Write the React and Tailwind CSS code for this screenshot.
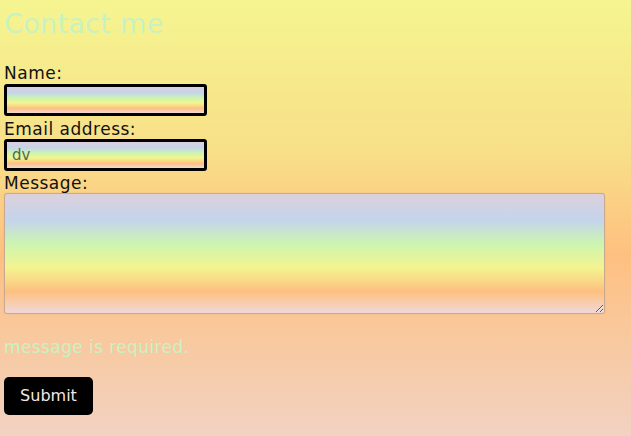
export default function App() {
  const field = "bg-[linear-gradient(to_bottom,#dcd0dc_0%,#c4d4ec_22%,#ccf5b0_42%,#f4f490_62%,#fec080_82%,#f0d8d8_100%)]";
  return (
    <div className="min-h-screen w-full bg-[linear-gradient(to_bottom,#f5f590_0%,#f8df88_35%,#fec080_58%,#f2d2c2_100%)] px-[4px] pt-[6px] font-['DejaVu_Sans',sans-serif] text-[#111]">
      <h1 className="text-[27px] leading-[36px] tracking-[0.3px] text-[#c9f2c1]">Contact me</h1>
      <form className="mt-[21px] flex flex-col">
        <label className="text-[17px] leading-[20px] tracking-[0.5px]">Name:</label>
        <input className={`mt-[1px] h-[32px] w-[203px] rounded-[3px] border-[3px] border-black ${field} outline-none`} />
        <label className="mt-[3px] text-[17px] leading-[20px] tracking-[0.5px]">Email address:</label>
        <input defaultValue="dv" className={`mt-[0px] h-[32px] w-[203px] rounded-[3px] border-[3px] border-black px-[5px] text-[15px] text-[#556a4a] ${field} outline-none`} />
        <label className="mt-[2px] text-[17px] leading-[20px] tracking-[0.5px]">Message:</label>
        <textarea className={`mt-[0px] h-[121px] w-[601px] rounded-[3px] border border-[#c8aa90] shadow-[0_0_1px_rgba(0,0,0,0.2)] ${field} outline-none`} />
        <p className="mt-[22px] text-[17px] leading-[22px] tracking-[0.4px] text-[#c9f2c1]">message is required.</p>
        <button type="button" className="mt-[19px] h-[38px] w-[89px] rounded-[5px] bg-black text-[16px] text-[#f5e6e6]">Submit</button>
      </form>
    </div>
  );
}
